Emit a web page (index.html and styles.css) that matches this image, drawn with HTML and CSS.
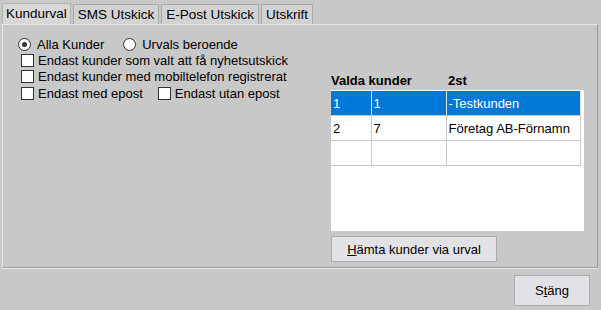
FILE: index.html
```html
<!DOCTYPE html>
<html>
<head>
	<title>Kundurval</title>
	<link rel="stylesheet" href="styles.css">
</head>
<body>
	<div class="window">
		<div class="tabs">
			<div class="tab active">Kundurval</div>
			<div class="tab">SMS Utskick</div>
			<div class="tab">E-Post Utskick</div>
			<div class="tab">Utskrift</div>
		</div>

		<div class="panel">
			<div class="options">
				<div class="row">
					<label class="opt"><span class="radio checked"></span>Alla Kunder</label>
					<label class="opt gap-radio"><span class="radio"></span>Urvals beroende</label>
				</div>
				<div class="row">
					<label class="opt"><span class="check"></span>Endast kunder som valt att få nyhetsutskick</label>
				</div>
				<div class="row">
					<label class="opt"><span class="check"></span>Endast kunder med mobiltelefon registrerat</label>
				</div>
				<div class="row">
					<label class="opt"><span class="check"></span>Endast med epost</label>
					<label class="opt gap-check"><span class="check"></span>Endast utan epost</label>
				</div>
			</div>

			<div class="selected">
				<div class="selected-head">
					<span class="title">Valda kunder</span>
					<span class="count">2st</span>
				</div>
				<div class="grid">
					<table>
						<colgroup>
							<col class="c1">
							<col class="c2">
							<col class="c3">
						</colgroup>
						<tr class="sel"><td>1</td><td>1</td><td>-Testkunden</td></tr>
						<tr><td>2</td><td>7</td><td>Företag AB-Förnamn</td></tr>
						<tr><td></td><td></td><td></td></tr>
					</table>
				</div>
				<button class="btn fetch"><u>H</u>ämta kunder via urval</button>
			</div>
		</div>

		<div class="footer">
			<button class="btn close">S<u>t</u>äng</button>
		</div>
	</div>
</body>
</html>
```

FILE: styles.css
```css
body {
	margin: 0;
	padding: 0;
	background-color: #c8c8c8;
	font-family: "Liberation Sans", Arial, sans-serif;
	font-size: 13px;
	color: #000;
}

.window {
	width: 601px;
	height: 310px;
}

.tabs {
	display: flex;
	padding: 3px 0 0 2px;
	height: 21px;
}

.tab {
	height: 19px;
	line-height: 19px;
	padding: 0 4px;
	margin-right: 2px;
	margin-top: 1px;
	background-color: #d2d2d2;
	border: 1px solid #a8a8a8;
	border-bottom: none;
	font-size: 13.5px;
}

.tab.active {
	background-color: #d8d8d8;
	margin-top: 0;
	height: 20px;
	padding: 0 3px;
	border-color: #b4b4b4;
}

.panel {
	display: flex;
	height: 242px;
	margin: 0 3px 0 2px;
	border-top: 1px solid #e8e8e8;
	border-left: 1px solid #e8e8e8;
	border-right: 1px solid #9a9a9a;
	border-bottom: 1px solid #9a9a9a;
	box-shadow: 0 1px 0 #ececec;
}

.options {
	padding: 11px 0 0 15px;
	width: 300px;
}

.row {
	display: flex;
	height: 16px;
	align-items: center;
}

.row:nth-child(3) {
	height: 17px;
}

.opt {
	display: flex;
	align-items: center;
}

.gap-radio {
	margin-left: 19px;
}

.gap-check {
	margin-left: 12px;
}

.radio {
	width: 11px;
	height: 11px;
	border: 1px solid #333;
	border-radius: 50%;
	background-color: #fff;
	margin-right: 6px;
	position: relative;
}

.radio.checked::after {
	content: "";
	position: absolute;
	left: 3px;
	top: 3px;
	width: 5px;
	height: 5px;
	border-radius: 50%;
	background-color: #333;
}

.check {
	width: 11px;
	height: 11px;
	border: 1px solid #333;
	background-color: #fff;
	margin-right: 4px;
	margin-left: 3px;
}

.selected {
	margin-left: 13px;
	padding-top: 47px;
}

.selected-head {
	display: flex;
	font-weight: bold;
	height: 18px;
	line-height: 18px;
}

.title {
	width: 117px;
}

.grid {
	width: 253px;
	height: 141px;
	background-color: #fff;
	padding-top: 1px;
	box-sizing: border-box;
}

table {
	border-collapse: collapse;
	table-layout: fixed;
	width: 250px;
}

col.c1 {
	width: 40px;
}

col.c2 {
	width: 75px;
}

td {
	height: 24px;
	padding: 0 0 0 2px;
	border: 1px solid #c8c8c8;
	border-top: none;
	border-left: none;
}

tr.sel td {
	background-color: #0078d7;
	color: #fff;
	border-right-color: #e0e0e0;
}

.btn {
	font-family: "Liberation Sans", Arial, sans-serif;
	font-size: 13px;
	background-color: #e2e2e6;
	border: 1px solid #adadad;
	color: #000;
	padding: 0;
}

.fetch {
	margin-top: 5px;
	width: 166px;
	height: 26px;
}

.footer {
	display: flex;
	justify-content: flex-end;
	padding: 7px 11px 0 0;
}

.close {
	width: 76px;
	height: 31px;
}
```
